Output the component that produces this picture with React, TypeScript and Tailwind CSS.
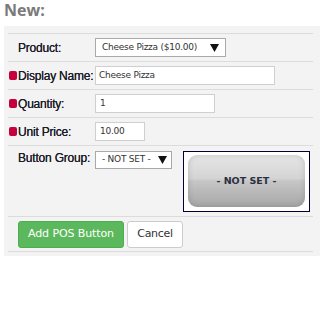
import React from "react";

const labelFont = { fontFamily: '"Liberation Sans", Arial, sans-serif' };
const inputFont = { fontFamily: '"DejaVu Sans", Verdana, sans-serif' };

function Req({ on }: { on: boolean }) {
  return (
    <span
      className={
        "inline-block shrink-0 w-[8px] h-[9px] rounded-[2px] mr-[1px] " +
        (on ? "bg-[#c4003f]" : "bg-transparent")
      }
    />
  );
}

function Label({ text, req }: { text: string; req: boolean }) {
  return (
    <div className="w-[85px] shrink-0 flex items-center pl-[1px]">
      <Req on={req} />
      <span
        className="whitespace-nowrap text-[12px] leading-[14px] tracking-[-0.2px] text-[#1c1c28] [text-shadow:0_0_0.5px_#1c1c28]"
        style={labelFont}
      >
        {text}
      </span>
    </div>
  );
}

function Arrow() {
  return (
    <svg width="9" height="8" viewBox="0 0 9 8" className="shrink-0">
      <path d="M0 0 H9 L4.5 8 Z" fill="#111" />
    </svg>
  );
}

export default function App() {
  return (
    <div className="w-[325px] h-[319px] bg-white">
      <div
        className="pl-1 text-[16px] font-bold leading-[20px] text-[#7a7a7a]"
        style={{ fontFamily: '"Open Sans", sans-serif' }}
      >
        New:
      </div>
      <div className="mt-[6px] ml-1 w-[316px] bg-[#f3f3f3] pt-[7px] pb-[4px] pl-1 pr-[7px]">
        {/* Product */}
        <div className="h-[28px] border-t border-[#dcdcdc] flex items-center">
          <Label text="Product:" req={false} />
          <div
            className="ml-[2px] w-[131px] h-[19px] bg-white border border-[#a9a9a9] flex items-center justify-between pl-[6px] pr-[6px] text-[9px] tracking-[-0.25px] text-[#333]"
            style={inputFont}
          >
            <span>Cheese Pizza ($10.00)</span>
            <Arrow />
          </div>
        </div>
        {/* Display Name */}
        <div className="h-[28px] border-t border-[#dcdcdc] flex items-center">
          <Label text="Display Name:" req={true} />
          <div
            className="ml-[2px] w-[180px] h-[19px] bg-white border border-[#cfcfcf] flex items-center pl-[3px] text-[9px] tracking-[-0.25px] text-[#333]"
            style={inputFont}
          >
            Cheese Pizza
          </div>
        </div>
        {/* Quantity */}
        <div className="h-[28px] border-t border-[#dcdcdc] flex items-center">
          <Label text="Quantity:" req={true} />
          <div
            className="ml-[2px] w-[120px] h-[19px] bg-white border border-[#cfcfcf] flex items-center pl-[4px] text-[9px] text-[#333]"
            style={inputFont}
          >
            1
          </div>
        </div>
        {/* Unit Price */}
        <div className="h-[28px] border-t border-[#dcdcdc] flex items-center">
          <Label text="Unit Price:" req={true} />
          <div
            className="ml-[2px] w-[50px] h-[19px] bg-white border border-[#cfcfcf] flex items-center pl-[4px] text-[9px] tracking-[-0.25px] text-[#333]"
            style={inputFont}
          >
            10.00
          </div>
        </div>
        {/* Button Group */}
        <div className="h-[71px] border-t border-[#dcdcdc] flex items-start pt-[5px]">
          <div className="w-[85px] shrink-0 flex items-start pl-[1px] pt-[1px]">
            <Req on={false} />
            <span
              className="whitespace-nowrap text-[12px] leading-[12px] tracking-[-0.2px] text-[#1c1c28] [text-shadow:0_0_0.5px_#1c1c28]"
              style={labelFont}
            >
              Button Group:
            </span>
          </div>
          <div
            className="ml-[2px] w-[77px] h-[18px] bg-white border border-[#a9a9a9] flex items-center justify-between pl-[6px] pr-[4px] text-[9px] tracking-[-0.25px] text-[#333]"
            style={inputFont}
          >
            <span>- NOT SET -</span>
            <Arrow />
          </div>
          <div className="ml-[11px] w-[127px] h-[61px] bg-white border border-[#000033] p-[3px] pl-[4px]">
            <div className="w-[117px] h-[52px] rounded-[9px] flex items-center justify-center bg-[linear-gradient(180deg,#e6e6e6_0%,#d4d4d4_45%,#c6c6c6_50%,#b6b6b6_75%,#a8a8a8_100%)] shadow-[inset_0_0_6px_rgba(0,0,0,0.15)]">
              <span className="text-[9.5px] font-bold text-[#2b2f3f]" style={inputFont}>
                - NOT SET -
              </span>
            </div>
          </div>
        </div>
        {/* Buttons */}
        <div className="h-[36px] border-t border-b border-[#dcdcdc] flex items-start pt-[4px] pl-[10px]">
          <div
            className="w-[106px] h-[27px] rounded-[3px] bg-[#5cb85c] border border-[#4cae4c] flex items-center justify-center text-white text-[11px] tracking-[-0.1px]"
            style={inputFont}
          >
            Add POS Button
          </div>
          <div
            className="ml-[3px] w-[56px] h-[27px] rounded-[3px] bg-white border border-[#cccccc] flex items-center justify-center text-[#333] text-[11px] tracking-[-0.3px]"
            style={inputFont}
          >
            Cancel
          </div>
        </div>
      </div>
    </div>
  );
}
